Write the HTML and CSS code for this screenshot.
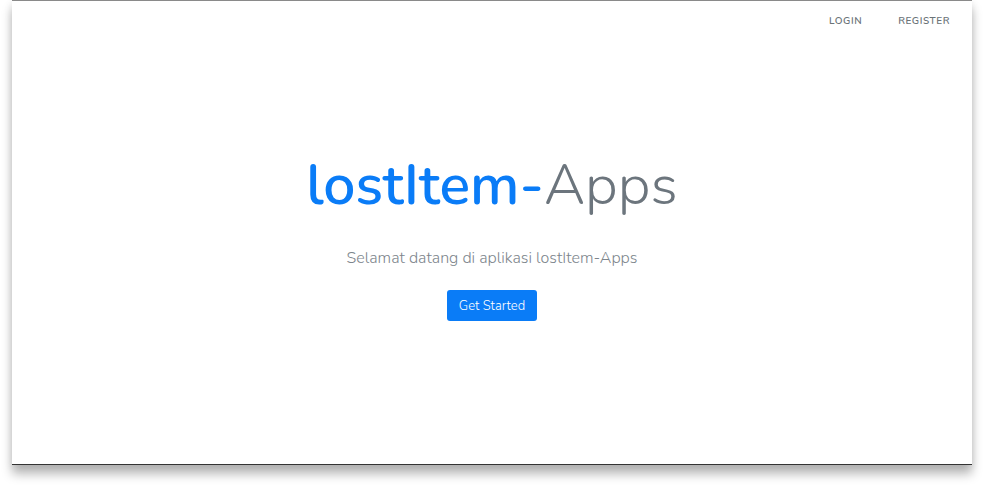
FILE: index.html
```html
<!DOCTYPE html>
<html lang="id">
<head>
<meta charset="utf-8">
<title>lostItem-Apps</title>
<link rel="stylesheet" href="styles.css">
</head>
<body>
<div class="frame">
  <header class="top">
    <nav class="links">
      <a href="#">Login</a>
      <a href="#">Register</a>
    </nav>
  </header>
  <main class="hero">
    <h1 class="title"><span class="brand">lostItem-</span><span class="apps">Apps</span></h1>
    <p class="lead">Selamat datang di aplikasi lostItem-Apps</p>
    <a class="btn" href="#">Get Started</a>
  </main>
</div>
</body>
</html>
```
FILE: styles.css
```css
* { box-sizing: border-box; }
html, body { margin: 0; padding: 0; background: #ffffff; }
body {
  font-family: "Nunito", "Lato", "Open Sans", sans-serif;
  width: 984px;
  height: 489px;
  overflow: hidden;
}
.frame {
  margin-left: 12px;
  width: 960px;
  height: 465px;
  background: #fff;
  border-top: 1px solid #8a8a8a;
  border-bottom: 1px solid #333;
  box-shadow: 0 9px 10px rgba(0,0,0,0.28), 0 2px 8px rgba(0,0,0,0.08);
  display: flex;
  flex-direction: column;
}
.top {
  display: flex;
  justify-content: flex-end;
  padding: 14px 22px 0 0;
  height: 30px;
}
.links { display: flex; gap: 36px; }
.links a {
  color: #6b7378;
  font-size: 10px;
  font-weight: 600;
  letter-spacing: 0.55px;
  text-transform: uppercase;
  text-decoration: none;
  line-height: 12px;
}
.hero {
  display: flex;
  flex-direction: column;
  align-items: center;
  padding-top: 118px;
}
.title {
  margin: 0;
  font-size: 57px;
  line-height: 72px;
  font-weight: 600;
  letter-spacing: 0;
}
.brand { color: #0a7cf7; }
.apps { color: #6c757d; font-weight: 300; }
.lead {
  margin: 25px 0 0;
  font-size: 16px;
  line-height: 24px;
  font-weight: 300;
  color: #7d858c;
}
.btn {
  margin-top: 20px;
  width: 90px;
  height: 31px;
  display: flex;
  align-items: center;
  justify-content: center;
  background: #0a7cf7;
  color: #fff;
  border-radius: 3px;
  font-size: 13px;
  font-weight: 300;
  text-decoration: none;
}
```
